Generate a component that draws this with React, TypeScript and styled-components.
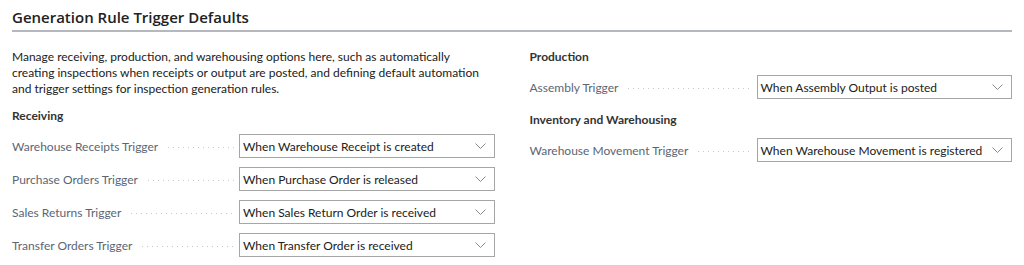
import React from 'react';
import styled, { createGlobalStyle } from 'styled-components';

const GlobalStyle = createGlobalStyle`
  html, body {
    margin: 0;
    padding: 0;
    background: #FFFFFF;
  }
  body {
    font-family: 'Lato', 'Open Sans', sans-serif;
    color: #212121;
  }
`;

const Page = styled.div`
  width: 1024px;
  height: 265px;
  padding: 7px 12px 0 12px;
  box-sizing: border-box;
`;

const Title = styled.h2`
  margin: 0;
  padding-bottom: 2px;
  font-family: 'Open Sans', 'Lato', sans-serif;
  font-size: 15px;
  line-height: 21px;
  font-weight: 600;
  color: #212121;
  border-bottom: 2px solid #B5B9BF;
`;

const Columns = styled.div`
  display: grid;
  grid-template-columns: 1fr 1fr;
  column-gap: 35px;
  margin-top: 17px;
`;

const Column = styled.div`
  display: flex;
  flex-direction: column;
`;

const Description = styled.p`
  margin: 0 0 11px 0;
  font-size: 12px;
  line-height: 16px;
  color: #212121;
`;

const GroupHeading = styled.div<{ spaced?: boolean }>`
  font-size: 12px;
  line-height: 16px;
  font-weight: 700;
  color: #333333;
  margin-top: ${props => props.spaced ? '13px' : '0'};
  margin-bottom: 10px;
`;

const Field = styled.div`
  display: flex;
  align-items: center;
  height: 24px;
  & + & {
    margin-top: 9px;
  }
`;

const LabelCell = styled.div`
  width: 227px;
  flex-shrink: 0;
  display: flex;
  align-items: center;
  padding-right: 5px;
  box-sizing: border-box;
`;

const Label = styled.span`
  font-size: 12px;
  color: #5B6675;
  white-space: nowrap;
`;

const Leader = styled.span`
  flex: 1;
  height: 1px;
  margin-left: 10px;
  margin-top: 2px;
  background-image: linear-gradient(to right, #C4C7CC 1px, transparent 1px);
  background-size: 5px 1px;
  background-repeat: repeat-x;
`;

const Select = styled.div`
  flex: 1;
  height: 24px;
  box-sizing: border-box;
  border: 1px solid #A6A6A6;
  display: flex;
  align-items: center;
  justify-content: space-between;
  padding: 0 8px 0 3px;
  font-size: 12px;
  color: #212121;
  white-space: nowrap;
`;

const Chevron = () => (
  <svg width="11" height="6" viewBox="0 0 11 6" fill="none">
    <path d="M0.5 0.5 L5.5 5.5 L10.5 0.5" stroke="#8A8A8A" strokeWidth="1" />
  </svg>
);

type FieldProps = { label: string; value: string };

function TriggerField({ label, value }: FieldProps) {
  return (
    <Field>
      <LabelCell>
        <Label>{label}</Label>
        <Leader />
      </LabelCell>
      <Select>
        <span>{value}</span>
        <Chevron />
      </Select>
    </Field>
  );
}

export default function App() {
  return (
    <>
      <GlobalStyle />
      <Page>
        <Title>Generation Rule Trigger Defaults</Title>
        <Columns>
          <Column>
            <Description>
              Manage receiving, production, and warehousing options here, such as automatically
              creating inspections when receipts or output are posted, and defining default automation
              and trigger settings for inspection generation rules.
            </Description>
            <GroupHeading>Receiving</GroupHeading>
            <TriggerField label="Warehouse Receipts Trigger" value="When Warehouse Receipt is created" />
            <TriggerField label="Purchase Orders Trigger" value="When Purchase Order is released" />
            <TriggerField label="Sales Returns Trigger" value="When Sales Return Order is received" />
            <TriggerField label="Transfer Orders Trigger" value="When Transfer Order is received" />
          </Column>
          <Column>
            <GroupHeading>Production</GroupHeading>
            <TriggerField label="Assembly Trigger" value="When Assembly Output is posted" />
            <GroupHeading spaced>Inventory and Warehousing</GroupHeading>
            <TriggerField label="Warehouse Movement Trigger" value="When Warehouse Movement is registered" />
          </Column>
        </Columns>
      </Page>
    </>
  );
}
